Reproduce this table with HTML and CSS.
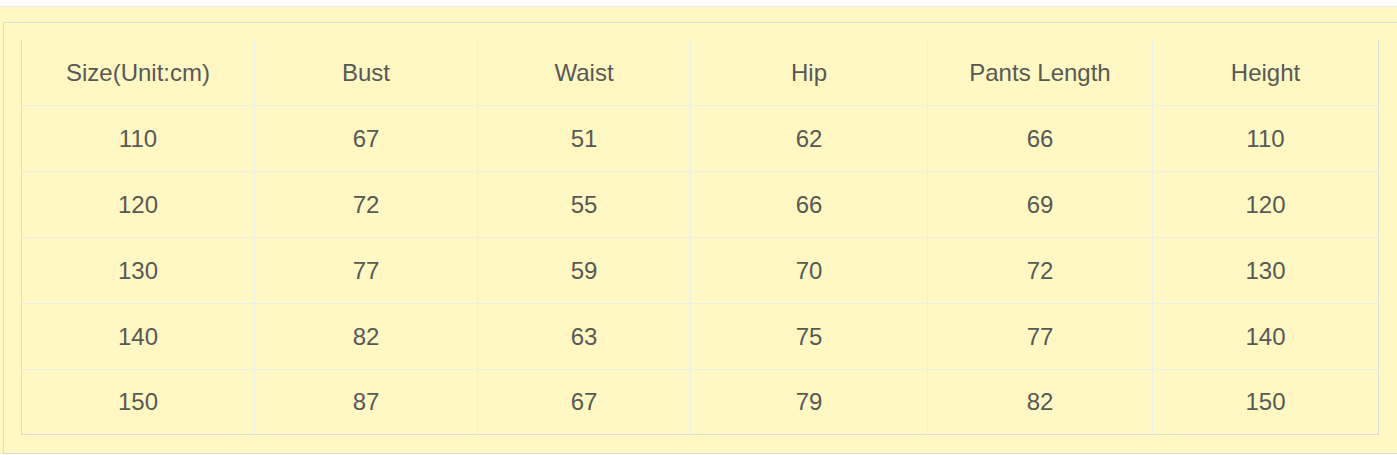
FILE: index.html
```html
<!DOCTYPE html>
<html>
<head>
<meta charset="utf-8">
<link rel="stylesheet" href="styles.css">
</head>
<body>
<div class="page">
  <div class="box">
    <table class="size-table">
      <thead>
        <tr>
          <th class="c1">Size(Unit:cm)</th>
          <th class="c2">Bust</th>
          <th class="c3">Waist</th>
          <th class="c4">Hip</th>
          <th class="c5">Pants Length</th>
          <th class="c6">Height</th>
        </tr>
      </thead>
      <tbody>
        <tr><td>110</td><td>67</td><td>51</td><td>62</td><td>66</td><td>110</td></tr>
        <tr><td>120</td><td>72</td><td>55</td><td>66</td><td>69</td><td>120</td></tr>
        <tr><td>130</td><td>77</td><td>59</td><td>70</td><td>72</td><td>130</td></tr>
        <tr><td>140</td><td>82</td><td>63</td><td>75</td><td>77</td><td>140</td></tr>
        <tr class="last"><td>150</td><td>87</td><td>67</td><td>79</td><td>82</td><td>150</td></tr>
      </tbody>
    </table>
  </div>
</div>
</body>
</html>
```

FILE: styles.css
```css
html, body {
  margin: 0;
  padding: 0;
  background: #fdfdfd;
  overflow: hidden;
}
body {
  font-family: "Liberation Sans", Arial, sans-serif;
  color: #585858;
}
.page {
  margin-top: 6px;
  border-top: 1px solid #ececec;
  background: #fff8c2;
  height: 448px;
  padding: 15px 0 0 3px;
  box-sizing: border-box;
  width: 1420px;
}
.box {
  width: 1410px;
  border: 1px solid #dcdcdc;
  padding: 17px 17px 18px 17px;
  box-sizing: border-box;
}
.size-table {
  border-collapse: collapse;
  border-left: 1px solid #dcdcdc;
  border-right: 1px solid #dcdcdc;
  border-bottom: 1px solid #dcdcdc;
}
.size-table th,
.size-table td {
  height: 65px;
  padding: 0;
  font-size: 24px;
  font-weight: normal;
  text-align: center;
  vertical-align: middle;
  border-left: 1px solid #efedea;
  border-top: 1px solid #efedea;
}
.size-table th {
  border-top: none;
}
.size-table .last td {
  height: 64px;
}
.size-table tr > :first-child {
  border-left: 1px solid #dcdcdc;
}
.c1 { width: 232px; }
.c2 { width: 222px; }
.c3 { width: 212px; }
.c4 { width: 236px; }
.c5 { width: 224px; }
.c6 { width: 225px; }
```
